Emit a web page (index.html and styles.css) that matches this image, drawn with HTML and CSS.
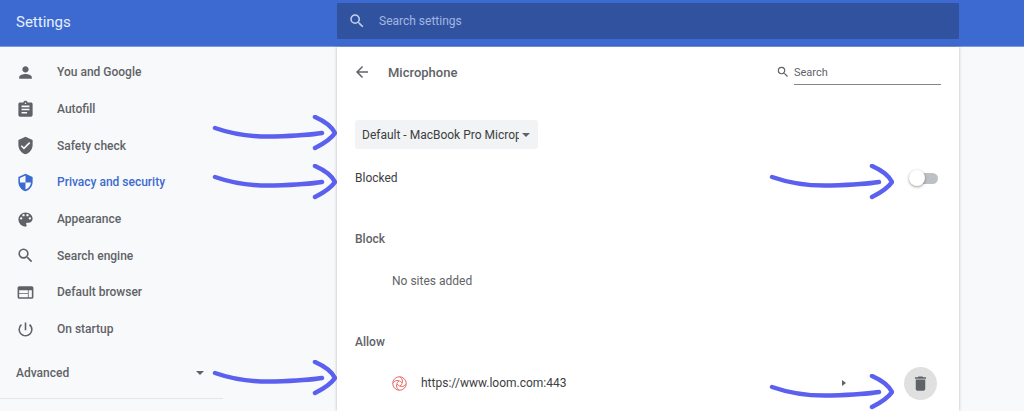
FILE: index.html
```html
<!DOCTYPE html>
<html lang="en">
<head>
    <meta charset="UTF-8">
    <title>Settings - Microphone</title>
    <link rel="stylesheet" href="styles.css">
</head>
<body>
    <svg class="defs" width="0" height="0">
        <symbol id="arrow" viewBox="0 0 126 36">
            <path d="M4 13C24 20 44 22 62 21.500C78 21 96 20.500 111 18" fill="none" stroke="currentColor" stroke-width="4.500" stroke-linecap="round"/>
            <path d="M104 2C112 5.500 120 10 124 18C120 24 112 29 104 33" fill="none" stroke="currentColor" stroke-width="4.500" stroke-linecap="round" stroke-linejoin="round"/>
        </symbol>
    </svg>

    <header class="topbar">
        <div class="topbar-title">Settings</div>
        <div class="search-box">
            <svg class="search-icon" viewBox="0 0 24 24"><path d="M15.500 14h-.79l-.28-.27A6.470 6.470 0 0 0 16 9.500 6.500 6.500 0 1 0 9.500 16c1.610 0 3.090-.59 4.230-1.570l.27.28v.79l5 4.990L20.490 19l-4.990-5zm-6 0C7.010 14 5 11.990 5 9.500S7.010 5 9.500 5 14 7.010 14 9.500 11.990 14 9.500 14z"/></svg>
            <span class="search-text">Search settings</span>
        </div>
    </header>

    <div class="layout">
        <nav class="sidebar">
            <a class="nav-item">
                <svg viewBox="0 0 24 24"><path d="M12 12c2.210 0 4-1.790 4-4s-1.790-4-4-4-4 1.790-4 4 1.790 4 4 4zm0 2c-2.670 0-8 1.340-8 4v2h16v-2c0-2.660-5.330-4-8-4z"/></svg>
                <span>You and Google</span>
            </a>
            <a class="nav-item">
                <svg viewBox="0 0 24 24"><path d="M19 3h-4.180C14.400 1.840 13.300 1 12 1s-2.400.84-2.820 2H5c-1.100 0-2 .9-2 2v14c0 1.100.9 2 2 2h14c1.100 0 2-.9 2-2V5c0-1.100-.9-2-2-2zm-7 0c.55 0 1 .45 1 1s-.45 1-1 1-1-.45-1-1 .45-1 1-1zm2 14H7v-2h7v2zm3-4H7v-2h10v2zm0-4H7V7h10v2z"/></svg>
                <span>Autofill</span>
            </a>
            <a class="nav-item">
                <svg viewBox="0 0 24 24"><path d="M12 1 3 5v6c0 5.550 3.840 10.740 9 12 5.160-1.260 9-6.450 9-12V5l-9-4zm-2 16-4-4 1.410-1.410L10 14.170l6.590-6.590L18 9l-8 8z"/></svg>
                <span>Safety check</span>
            </a>
            <a class="nav-item active">
                <svg viewBox="0 0 24 24"><path d="M12 1 3 5v6c0 5.550 3.840 10.740 9 12 5.160-1.260 9-6.450 9-12V5l-9-4zm0 11h7c-.53 4.120-3.280 7.790-7 8.940V12H5V6.300l7-3.110V12z"/></svg>
                <span>Privacy and security</span>
            </a>
            <a class="nav-item">
                <svg viewBox="0 0 24 24"><path d="M12 3a9 9 0 0 0 0 18c.83 0 1.500-.67 1.500-1.500 0-.39-.15-.74-.39-1.010-.23-.26-.38-.61-.38-.99 0-.83.67-1.500 1.500-1.500H16c2.760 0 5-2.240 5-5 0-4.420-4.030-8-9-8zm-5.500 9a1.500 1.500 0 1 1 0-3 1.500 1.500 0 0 1 0 3zm3-4a1.500 1.500 0 1 1 0-3 1.500 1.500 0 0 1 0 3zm5 0a1.500 1.500 0 1 1 0-3 1.500 1.500 0 0 1 0 3zm3 4a1.500 1.500 0 1 1 0-3 1.500 1.500 0 0 1 0 3z"/></svg>
                <span>Appearance</span>
            </a>
            <a class="nav-item">
                <svg viewBox="0 0 24 24"><path d="M15.500 14h-.79l-.28-.27A6.470 6.470 0 0 0 16 9.500 6.500 6.500 0 1 0 9.500 16c1.610 0 3.090-.59 4.230-1.570l.27.28v.79l5 4.990L20.490 19l-4.990-5zm-6 0C7.010 14 5 11.990 5 9.500S7.010 5 9.500 5 14 7.010 14 9.500 11.990 14 9.500 14z"/></svg>
                <span>Search engine</span>
            </a>
            <a class="nav-item">
                <svg viewBox="0 0 24 24"><path d="M20 4H4c-1.100 0-2 .9-2 2v12c0 1.100.9 2 2 2h16c1.100 0 2-.9 2-2V6c0-1.100-.9-2-2-2zm-5 14H4v-4h11v4zm0-5H4V9h11v4zm5 5h-4V9h4v9z"/></svg>
                <span>Default browser</span>
            </a>
            <a class="nav-item">
                <svg viewBox="0 0 24 24"><path d="M13 3h-2v10h2V3zm4.830 2.170-1.420 1.420A6.920 6.920 0 0 1 19 12c0 3.870-3.130 7-7 7s-7-3.130-7-7c0-2.190 1.010-4.140 2.580-5.420L6.170 5.170A8.930 8.930 0 0 0 3 12a9 9 0 0 0 18 0c0-2.740-1.230-5.180-3.170-6.830z"/></svg>
                <span>On startup</span>
            </a>
            <div class="advanced">
                <span>Advanced</span>
                <i class="caret"></i>
            </div>
        </nav>

        <main class="card">
            <div class="card-head">
                <svg class="back-icon" viewBox="0 0 24 24"><path d="M20 11H7.830l5.590-5.590L12 4l-8 8 8 8 1.410-1.410L7.830 13H20v-2z"/></svg>
                <h1>Microphone</h1>
                <div class="card-search">
                    <svg viewBox="0 0 24 24"><path d="M15.500 14h-.79l-.28-.27A6.470 6.470 0 0 0 16 9.500 6.500 6.500 0 1 0 9.500 16c1.610 0 3.090-.59 4.230-1.570l.27.28v.79l5 4.990L20.490 19l-4.990-5zm-6 0C7.010 14 5 11.990 5 9.500S7.010 5 9.500 5 14 7.010 14 9.500 11.990 14 9.500 14z"/></svg>
                    <span class="card-search-field">Search</span>
                </div>
            </div>

            <div class="select">
                <span class="select-value">Default - MacBook Pro Microphone</span>
                <i class="caret"></i>
            </div>

            <div class="row-blocked">
                <span>Blocked</span>
                <div class="toggle"><i></i></div>
            </div>

            <h2 class="section-label label-block">Block</h2>
            <p class="empty">No sites added</p>

            <h2 class="section-label label-allow">Allow</h2>
            <div class="site-row">
                <svg class="site-icon" viewBox="0 0 24 24" fill="none" stroke="#ea6a64" stroke-width="1.600">
                    <circle cx="12" cy="12" r="10.800"/>
                    <path d="M12 1.200C18 5 18.500 11 13 16"/>
                    <path d="M22.800 12C19 18 13 18.500 8 13"/>
                    <path d="M12 22.800C6 19 5.500 13 11 8"/>
                    <path d="M1.200 12C5 6 11 5.500 16 11"/>
                </svg>
                <span class="site-url">https://www.loom.com:443</span>
                <i class="site-arrow"></i>
                <div class="delete-btn">
                    <svg viewBox="0 0 24 24"><path d="M6 19c0 1.100.9 2 2 2h8c1.100 0 2-.9 2-2V7H6v12zM19 4h-3.500l-1-1h-5l-1 1H5v2h14V4z"/></svg>
                </div>
            </div>
        </main>
    </div>

    <!-- hand drawn arrows on top of the screenshot -->
    <svg class="arrow arrow-select"><use href="#arrow"/></svg>
    <svg class="arrow arrow-privacy"><use href="#arrow"/></svg>
    <svg class="arrow arrow-advanced"><use href="#arrow"/></svg>
    <svg class="arrow arrow-toggle"><use href="#arrow"/></svg>
    <svg class="arrow arrow-delete"><use href="#arrow"/></svg>
</body>
</html>
```

FILE: styles.css
```css
html, body {
    height: 411px;
    overflow: hidden;
}
body {
    position: relative;
    margin: 0;
    font-family: Roboto, "Liberation Sans", sans-serif;
    font-size: 12px;
    color: #5f6368;
    background-color: #f8f9fa;
}
.defs {
    position: absolute;
}
.topbar {
    display: flex;
    height: 47px;
    background-color: #3c6ad0;
    box-sizing: border-box;
    padding-top: 3px;
    border-bottom: 1px solid #7a9ae2;
}
.topbar-title {
    width: 337px;
    padding: 10px 0 0 16px;
    box-sizing: border-box;
    font-size: 15px;
    color: #e8eefa;
}
.search-box {
    display: flex;
    align-items: center;
    width: 622px;
    height: 36px;
    background-color: #31539f;
    border-radius: 1px;
}
.search-icon {
    width: 18px;
    height: 18px;
    margin-left: 11px;
    fill: #c4d2ee;
}
.search-text {
    margin-left: 13px;
    color: #a3b6e2;
}
.layout {
    display: flex;
    height: 364px;
}
.sidebar {
    width: 337px;
    padding-top: 7px;
    box-sizing: border-box;
}
.nav-item {
    display: flex;
    align-items: center;
    height: 36.7px;
    padding-left: 16px;
    font-weight: 500;
}
.nav-item svg {
    width: 19px;
    height: 19px;
    fill: #5f6368;
    margin-right: 22px;
}
.nav-item.active {
    color: #3c6ad0;
}
.nav-item.active svg {
    fill: #3c6ad0;
}
.advanced {
    display: flex;
    align-items: center;
    justify-content: space-between;
    width: 223px;
    height: 51px;
    padding: 0 19px 0 16px;
    box-sizing: border-box;
    border-bottom: 1px solid #e4e6e9;
    font-weight: 500;
}
.caret {
    display: block;
    border-left: 4px solid transparent;
    border-right: 4px solid transparent;
    border-top: 4px solid #5f6368;
}
.card {
    width: 622px;
    padding: 0 18px;
    box-sizing: border-box;
    background-color: #fff;
    box-shadow: 0 0 3px rgba(60, 64, 67, 0.35);
    color: #5f6368;
}
.card-head {
    display: flex;
    align-items: center;
    height: 50px;
}
.back-icon {
    width: 18px;
    height: 18px;
    fill: #5f6368;
    margin-left: -2px;
}
.card-head h1 {
    margin: 0 0 0 17px;
    font-size: 13px;
    font-weight: 500;
}
.card-search {
    display: flex;
    align-items: center;
    margin-left: auto;
}
.card-search svg {
    width: 14px;
    height: 14px;
    fill: #5f6368;
    margin-right: 4px;
}
.card-search-field {
    width: 147px;
    height: 23px;
    line-height: 22px;
    box-sizing: border-box;
    border-bottom: 1px solid #80868b;
    margin-top: 3px;
    font-size: 11px;
}
.select {
    display: flex;
    align-items: center;
    width: 183px;
    height: 29px;
    margin-top: 23px;
    padding: 0 7px;
    box-sizing: border-box;
    background-color: #f1f3f4;
    border-radius: 3px;
    color: #3c4043;
}
.select-value {
    width: 157px;
    white-space: nowrap;
    overflow: hidden;
}
.select .caret {
    margin-left: 3px;
}
.row-blocked {
    display: flex;
    align-items: center;
    justify-content: space-between;
    height: 28px;
    margin-top: 15px;
    padding-right: 3px;
    color: #3c4043;
}
.toggle {
    position: relative;
    width: 26px;
    height: 11px;
    background-color: #bdc1c6;
    border-radius: 6px;
}
.toggle i {
    position: absolute;
    left: -3px;
    top: -2.5px;
    width: 16px;
    height: 16px;
    border-radius: 50%;
    background-color: #fff;
    box-shadow: 0 1px 3px rgba(0, 0, 0, 0.4);
}
.section-label {
    margin: 0;
    font-size: 12px;
    font-weight: 500;
}
.label-block {
    margin-top: 40px;
}
.empty {
    margin: 28px 0 0 37px;
}
.label-allow {
    margin-top: 47px;
}
.site-row {
    display: flex;
    align-items: center;
    height: 34px;
    margin-top: 17px;
    padding-left: 37px;
    color: #3c4043;
}
.site-icon {
    width: 15px;
    height: 15px;
}
.site-url {
    margin-left: 14px;
}
.site-arrow {
    display: block;
    margin-left: auto;
    border-top: 3.5px solid transparent;
    border-bottom: 3.5px solid transparent;
    border-left: 4px solid #5f6368;
}
.delete-btn {
    display: flex;
    align-items: center;
    justify-content: center;
    width: 33px;
    height: 33px;
    margin-left: 58px;
    margin-right: 4px;
    background-color: #e0e0e0;
    border-radius: 50%;
}
.delete-btn svg {
    width: 19px;
    height: 19px;
    fill: #5f6368;
}
.arrow {
    position: absolute;
    width: 126px;
    height: 36px;
    color: #5b61ee;
}
.arrow-select {
    left: 211px;
    top: 115px;
}
.arrow-privacy {
    left: 211px;
    top: 164px;
}
.arrow-advanced {
    left: 211px;
    top: 360px;
}
.arrow-toggle {
    left: 768px;
    top: 164px;
}
.arrow-delete {
    left: 768px;
    top: 374px;
}
```
